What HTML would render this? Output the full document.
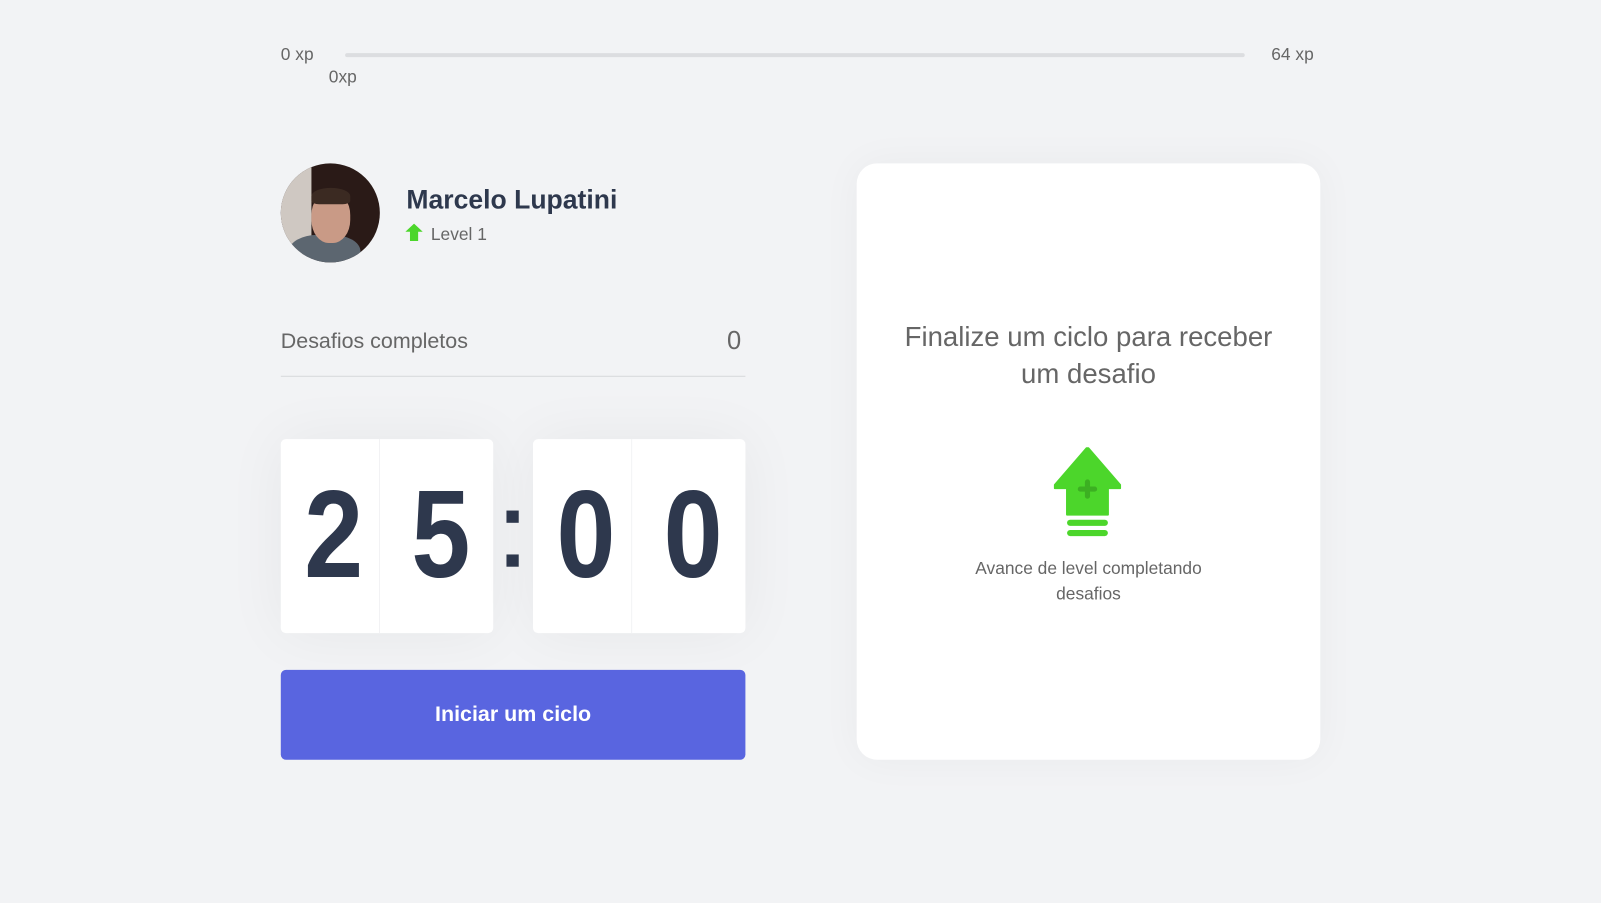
<!DOCTYPE html>
<html><head><meta charset="utf-8"><style>
*{margin:0;padding:0;box-sizing:border-box}
body{width:1601px;height:903px;background:#f2f3f5;font-family:"Liberation Sans",sans-serif;color:#666;position:relative;overflow:hidden}
#w{position:absolute;left:0;top:0;width:1568px;height:884px;transform:scale(1.0211);transform-origin:0 0}
.a{position:absolute}
.d{flex:1;text-align:center;line-height:186px;transform:scaleX(.85)}
</style></head><body><div id="w">
<div class="a" style="left:275px;top:44px;font-size:17px">0 xp</div>
<div class="a" style="left:338px;top:52px;width:881px;height:4px;border-radius:4px;background:#dcdde0"></div>
<div class="a" style="left:322px;top:66px;font-size:17px">0xp</div>
<div class="a" style="left:1245px;top:44px;font-size:17px">64 xp</div>

<div class="a" style="left:275px;top:160px;width:97px;height:97px;border-radius:50%;overflow:hidden;background:#2a1a17">
<div class="a" style="left:0;top:0;width:30px;height:97px;background:#cfc8c2"></div>
<div class="a" style="left:8px;top:70px;width:70px;height:40px;border-radius:40% 40% 0 0;background:#5c6670"></div>
<div class="a" style="left:30px;top:28px;width:38px;height:50px;border-radius:45%;background:#c99a86"></div>
<div class="a" style="left:30px;top:24px;width:38px;height:16px;border-radius:50% 50% 20% 20%;background:#3b2a22"></div>
</div>
<div class="a" style="left:398px;top:180px;font-size:26px;font-weight:700;color:#2e384d">Marcelo Lupatini</div>
<svg class="a" style="left:397px;top:219px" width="17" height="17" viewBox="0 0 17 17"><path d="M8.5 0L17 8H12.5V17H4.5V8H0Z" fill="#4cd62b"/></svg>
<div class="a" style="left:422px;top:220px;font-size:17px">Level 1</div>

<div class="a" style="left:275px;top:323px;font-size:21px">Desafios completos</div>
<div class="a" style="left:712px;top:320px;font-size:25px">0</div>
<div class="a" style="left:275px;top:368px;width:455px;height:1px;background:#d7d8da"></div>

<div class="a" style="left:275px;top:430px;width:208px;height:190px;background:#fff;border-radius:5px;box-shadow:0 0 60px rgba(0,0,0,.05);display:flex;font-size:122px;font-weight:700;color:#2e384d">
<div class="d" style="border-right:1px solid #f0f1f3">2</div><div class="d">5</div></div>
<div class="a" style="left:496px;top:500px;width:12px;height:12px;background:#2e384d"></div>
<div class="a" style="left:496px;top:543px;width:12px;height:12px;background:#2e384d"></div>
<div class="a" style="left:522px;top:430px;width:208px;height:190px;background:#fff;border-radius:5px;box-shadow:0 0 60px rgba(0,0,0,.05);display:flex;font-size:122px;font-weight:700;color:#2e384d">
<div class="d" style="border-right:1px solid #f0f1f3">0</div><div class="d">0</div></div>

<div class="a" style="left:275px;top:656px;width:455px;height:88px;background:#5965e0;border-radius:5px;color:#fff;font-size:21px;font-weight:700;text-align:center;line-height:88px">Iniciar um ciclo</div>

<div class="a" style="left:839px;top:160px;width:454px;height:584px;background:#fff;border-radius:20px;box-shadow:0 0 40px rgba(0,0,0,.04)">
<div class="a" style="left:0;top:152px;width:454px;text-align:center;font-size:27px;line-height:36px;color:#666">Finalize um ciclo para receber<br>um desafio</div>
<svg class="a" style="left:193px;top:278px" width="66" height="88" viewBox="0 0 66 88"><path d="M33 0L65 37V40H53V66H13V40H1V37Z" fill="#4cd62b" stroke="#4cd62b" stroke-linejoin="round" stroke-width="2"/><path d="M33 34v14M26 41h14" stroke="#3cb022" stroke-width="5" stroke-linecap="round"/><rect x="13" y="71" width="40" height="6" rx="3" fill="#4cd62b"/><rect x="13" y="81" width="40" height="6" rx="3" fill="#4cd62b"/></svg>
<div class="a" style="left:0;top:384px;width:454px;text-align:center;font-size:17px;line-height:25px">Avance de level completando<br>desafios</div>
</div>
</div></body></html>
